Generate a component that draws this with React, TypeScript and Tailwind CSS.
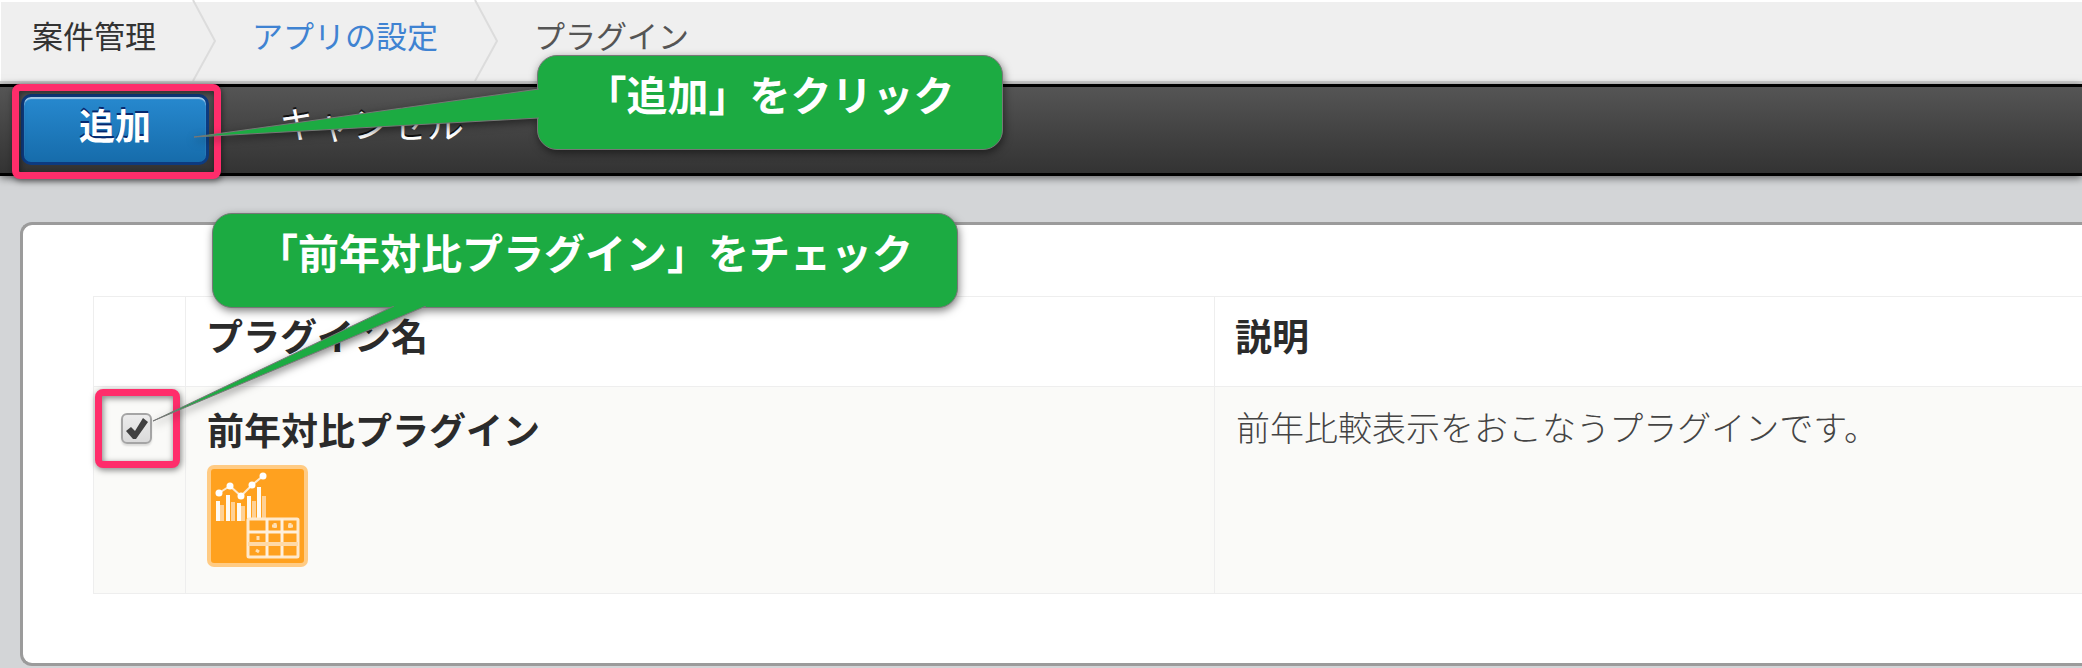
import type { ReactNode } from 'react'
import { clsx } from 'clsx'

interface Plugin {
	id: string
	name: string
	description: string
}

const plugins: Plugin[] = [
	{
		id: 'year-comparison',
		name: '前年対比プラグイン',
		description: '前年比較表示をおこなうプラグインです。',
	},
]

function Chevron() {
	return (
		<svg
			width="24"
			height="81"
			viewBox="0 0 24 81"
			fill="none"
			className="shrink-0"
			aria-hidden="true"
		>
			<path d="M1 0L23 41L1 81" stroke="#dcdcdc" strokeWidth="2" />
		</svg>
	)
}

function Breadcrumbs() {
	return (
		<nav
			aria-label="パンくず"
			className="border-b-3 border-[#d2d2d2] bg-[#efefef] shadow-[inset_1px_2px_0_#fff]"
		>
			<ol className="flex items-center gap-9 pl-8 text-[31px] leading-10 whitespace-nowrap">
				<li className="pb-3 text-[#333]">案件管理</li>
				<li aria-hidden="true">
					<Chevron />
				</li>
				<li className="pb-3">
					<a href="#settings" className="text-[#3f83d2]">
						アプリの設定
					</a>
				</li>
				<li aria-hidden="true">
					<Chevron />
				</li>
				<li className="pb-3 text-[#555]">プラグイン</li>
			</ol>
		</nav>
	)
}

function Highlight({ className }: { className: string }) {
	return (
		<span
			className={clsx(
				'pointer-events-none absolute rounded-lg border-[7px] border-[#ff2d6b] drop-shadow-[1px_2px_3px_rgba(0,0,0,0.5)]',
				className,
			)}
		/>
	)
}

function Toolbar() {
	return (
		<div className="relative flex items-start gap-[70px] border-y-3 border-black bg-linear-to-b from-[#555] to-[#333] pt-[7px] pb-2 pl-[21px] shadow-[0_2px_8px_rgba(0,0,0,0.55)]">
			<div className="relative">
				<button
					type="button"
					className="h-[71px] w-[188px] rounded-[10px] border-3 border-[#0d3b80] bg-linear-to-b from-[#2789cf] to-[#166cab] pb-3 text-4xl font-bold text-white shadow-[inset_0_2px_1px_#a9cdea] text-shadow-[0_-2px_0_#06286e]"
				>
					追加
				</button>
				<Highlight className="-top-2.5 -right-3 -bottom-3.5 -left-[9px]" />
			</div>
			<button
				type="button"
				className="h-[60px] text-[37px] text-white text-shadow-[0_-2px_0_#111]"
			>
				キャンセル
			</button>
		</div>
	)
}

function PluginIcon() {
	return (
		<svg
			width="101"
			height="102"
			viewBox="0 0 101 102"
			fill="none"
			className="mt-[13px]"
			aria-hidden="true"
		>
			<rect width="101" height="102" rx="7" fill="#ffcb84" />
			<rect x="4" y="4" width="93" height="94" rx="3" fill="#ffa11f" />
			<path
				d="M15 40V56M26 37V56M36 41V56M47 36V53M57 31V53"
				stroke="#ffd195"
				strokeWidth="4"
			/>
			<path
				d="M11 36V56M21 30V56M32 38V56M42 31V53M52 22V53"
				stroke="#fffaf2"
				strokeWidth="4"
			/>
			<path
				d="M12 28L23 21L34 31L45 20L56 11"
				stroke="#ffe9cc"
				strokeWidth="2"
			/>
			<g fill="#fff">
				<circle cx="12" cy="28" r="3.5" />
				<circle cx="23" cy="21" r="3.5" />
				<circle cx="34" cy="31" r="3.5" />
				<circle cx="45" cy="20" r="3.5" />
				<circle cx="56" cy="11" r="3.5" />
			</g>
			<rect
				x="41"
				y="54"
				width="50"
				height="38"
				rx="1"
				stroke="#ffe9cc"
				strokeWidth="3"
			/>
			<path
				d="M60 54V92M75 54V92M41 67H91"
				stroke="#fff0dc"
				strokeWidth="3"
			/>
			<path d="M41 79H91" stroke="#ffd9a6" strokeWidth="4" />
			<path
				d="M68 58V63M65 61H70M81 61H86M83 58V63M51 71V75M49 85L52 87"
				stroke="#ffdfb3"
				strokeWidth="3"
			/>
		</svg>
	)
}

function PluginCheckbox({ id }: { id: string }) {
	return (
		<div className="relative mx-auto grid size-[31px] place-items-center">
			<input
				id={id}
				type="checkbox"
				defaultChecked
				className="peer col-start-1 row-start-1 size-[31px] appearance-none rounded-md border-2 border-[#a5a5a5] bg-linear-to-b from-[#ececec] to-[#dadada] shadow-[0_2px_2px_rgba(0,0,0,0.12)]"
			/>
			<svg
				width="22"
				height="22"
				viewBox="0 0 22 22"
				className="pointer-events-none invisible col-start-1 row-start-1 peer-checked:visible"
				aria-hidden="true"
			>
				<path d="M0 13L5 9L9 13L17 0L22 4L10 21L7 21Z" fill="#404040" />
			</svg>
			<Highlight className="-top-6 -right-7 -bottom-6 -left-[26px]" />
		</div>
	)
}

function PluginTable() {
	return (
		<table className="w-full border-collapse text-left text-[#2b2b2b]">
			<thead>
				<tr className="h-[90px] text-[37px]">
					<td className="w-[92px] border border-[#eee]" />
					<th
						scope="col"
						className="w-[1029px] border border-[#eee] px-5 pb-3"
					>
						プラグイン名
					</th>
					<th
						scope="col"
						className="border border-r-0 border-[#eee] px-5 pb-3"
					>
						説明
					</th>
				</tr>
			</thead>
			<tbody>
				{plugins.map((plugin) => (
					<tr key={plugin.id} className="h-[207px] bg-[#fafaf8] align-top">
						<td className="border border-[#eee] pt-[26px] pr-1.5">
							<PluginCheckbox id={plugin.id} />
						</td>
						<td className="border border-[#eee] px-[21px] pt-5 pb-6">
							<label
								htmlFor={plugin.id}
								className="block text-[37px] leading-[45px] font-bold"
							>
								{plugin.name}
							</label>
							<PluginIcon />
						</td>
						<td className="border border-r-0 border-[#eee] px-[21px] pt-[17px] text-[34px] leading-[45px] font-light text-[#444]">
							{plugin.description}
						</td>
					</tr>
				))}
			</tbody>
		</table>
	)
}

interface CalloutProps {
	className: string
	tail: ReactNode
	children: ReactNode
}

function Callout({ className, tail, children }: CalloutProps) {
	return (
		<div
			className={clsx(
				'absolute drop-shadow-[1px_3px_4px_rgba(0,0,0,0.5)]',
				className,
			)}
		>
			<p className="h-[95px] rounded-[20px] border border-[#777] bg-[#1cab42] pt-2.5 text-center text-[41px] leading-[54px] font-bold whitespace-nowrap text-white">
				{children}
			</p>
			{tail}
		</div>
	)
}

export default function App() {
	return (
		<div className="relative min-h-screen overflow-hidden bg-[#d3d5d7] pb-0.5 font-['Noto_Sans_CJK_JP',sans-serif]">
			<Breadcrumbs />
			<Toolbar />
			<main className="mt-[46px] ml-5 rounded-l-xl border-y-3 border-l-3 border-[#9b9b9b] bg-white pt-[71px] pb-[69px] pl-[70px]">
				<PluginTable />
			</main>

			<Callout
				className="top-[55px] left-[537px] w-[466px]"
				tail={
					<svg
						width="347"
						height="52"
						viewBox="0 0 347 52"
						className="absolute top-[32px] right-[464px]"
						aria-hidden="true"
					>
						<path
							d="M347 2L2 50L347 31"
							fill="#1cab42"
							stroke="#777"
							strokeWidth="1"
						/>
					</svg>
				}
			>
				「追加」をクリック
			</Callout>

			<Callout
				className="top-[213px] left-[212px] w-[746px]"
				tail={
					<svg
						width="280"
						height="117"
						viewBox="0 0 280 117"
						className="absolute top-[93px] -left-[61px]"
						aria-hidden="true"
					>
						<path
							d="M243 0L2 115L275 0"
							fill="#1cab42"
							stroke="#777"
							strokeWidth="1"
						/>
					</svg>
				}
			>
				「前年対比プラグイン」をチェック
			</Callout>
		</div>
	)
}
